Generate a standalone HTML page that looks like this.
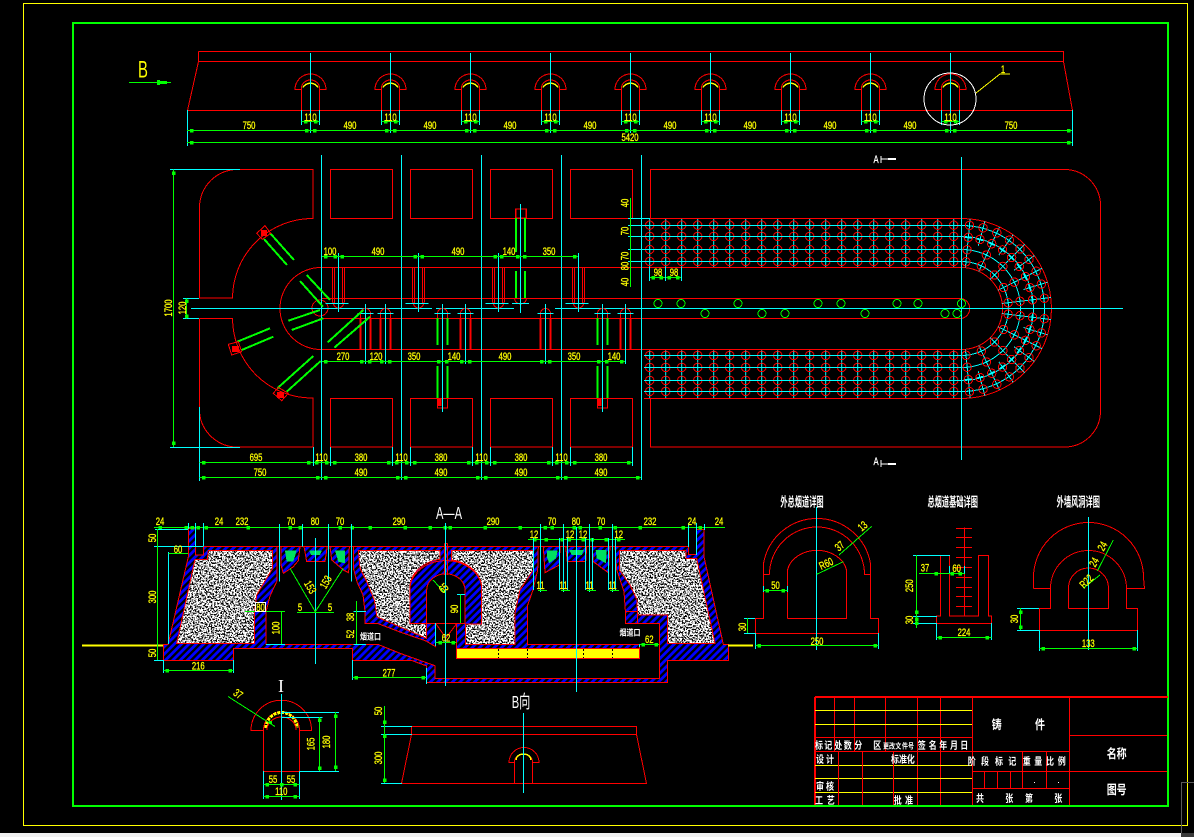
<!DOCTYPE html>
<html><head><meta charset="utf-8"><title>CAD</title>
<style>
html,body{margin:0;padding:0;background:#000;width:1194px;height:837px;overflow:hidden}
svg{display:block;position:absolute;left:0;top:0}
.d{font:11px "Liberation Sans",sans-serif;fill:#ff0;stroke:#ff0;stroke-width:.3;text-anchor:middle;transform-box:fill-box;transform-origin:center;transform:scaleX(.7)}
.w{font:8px "Noto Sans CJK SC","Liberation Sans",sans-serif;font-weight:700;fill:#fff;text-anchor:middle;transform-box:fill-box;transform-origin:center;transform:scaleY(1.25)}
.n{font-size:6px}
.t{font:8.5px "Noto Sans CJK SC","Liberation Sans",sans-serif;font-weight:700;fill:#fff;text-anchor:middle;transform-box:fill-box;transform-origin:center;transform:scale(.85,1.55)}
.dm{marker-mid:url(#s)}
.big{font:24px "Liberation Sans",sans-serif;text-anchor:middle;transform-box:fill-box;transform-origin:center;transform:scaleX(.62)}
</style></head><body>
<svg width="1194" height="837" viewBox="0 0 1194 837" xmlns="http://www.w3.org/2000/svg" shape-rendering="crispEdges" fill="none">
<defs>
<marker id="s" viewBox="0 0 3 3" refX="1.5" refY="1.5" markerWidth="3.5" markerHeight="3.5" markerUnits="userSpaceOnUse" orient="0"><rect width="3" height="3" fill="#0f0"/></marker>
<pattern id="h" patternUnits="userSpaceOnUse" width="5.2" height="5.2" patternTransform="rotate(45)"><rect width="5.2" height="5.2" fill="#000"/><rect width="3" height="5.2" fill="#00f"/></pattern>
<filter id="nz" x="0" y="0" width="1" height="1" color-interpolation-filters="sRGB"><feTurbulence type="fractalNoise" baseFrequency="0.62" numOctaves="2" seed="7"/><feColorMatrix values="0 0 0 0 1 0 0 0 0 1 0 0 0 0 1 16 0 0 0 -7"/><feComposite in2="SourceAlpha" operator="in"/></filter>
<g id="ar">
<path stroke="#f00" d="M-9 89.5H-15.5A15.5 15.5 0 0 1 15.5 89.5H9M-9 110V88A9 8 0 0 1 9 88V110"/>
<path stroke="#ff0" stroke-width="1.5" d="M-7.5 87.5A8 6.5 0 0 1 7.5 87.5"/>
<path stroke="#0ff" d="M0 53V133M-9 110V125M9 110V125"/>
<path stroke="#0f0" class="dm" d="M-9 121.5H-5H5H9"/>
</g>
<pattern id="g1" patternUnits="userSpaceOnUse" x="641.7" y="218" width="16" height="50"><path stroke="#0ff" d="M8 1V49"/><g stroke="#f00"><circle cx="8" cy="7.2" r="4.2"/><circle cx="8" cy="18.4" r="4.2"/><circle cx="8" cy="31.5" r="4.2"/><circle cx="8" cy="43.4" r="4.2"/></g></pattern>
<pattern id="g2" patternUnits="userSpaceOnUse" x="641.7" y="349" width="16" height="50"><path stroke="#0ff" d="M8 1V49"/><g stroke="#f00"><circle cx="8" cy="6.4" r="4.2"/><circle cx="8" cy="18.4" r="4.2"/><circle cx="8" cy="31.4" r="4.2"/><circle cx="8" cy="42.4" r="4.2"/></g></pattern>
<g id="ra"><path stroke="#0ff" d="M65 0H90M71 -4V4M83 -4V4"/><circle cx="71.5" r="4.2" stroke="#f00"/><circle cx="83.5" r="4.2" stroke="#f00"/></g>
<g id="rb"><path stroke="#0ff" d="M41 0H65M47 -4V4M59 -4V4"/><circle cx="47" r="4.2" stroke="#f00"/><circle cx="59" r="4.2" stroke="#f00"/></g>
<g id="q">
<use href="#ra" transform="rotate(-7)"/><use href="#ra" transform="rotate(-17)"/><use href="#ra" transform="rotate(-26.5)"/><use href="#ra" transform="rotate(-36)"/><use href="#ra" transform="rotate(-45.5)"/><use href="#ra" transform="rotate(-55)"/><use href="#ra" transform="rotate(-65)"/><use href="#ra" transform="rotate(-75)"/><use href="#ra" transform="rotate(-84.5)"/>
<use href="#rb" transform="rotate(-7)"/><use href="#rb" transform="rotate(-26.5)"/><use href="#rb" transform="rotate(-45.5)"/><use href="#rb" transform="rotate(-65)"/><use href="#rb" transform="rotate(-84.5)"/>
</g>
<g id="up"><path stroke="#f00" d="M-6 267.5V300M-4 267.5V303M4 267.5V303M6 267.5V300M-6 300A6 8 0 0 0 6 300"/><path stroke="#0ff" d="M-13 303.5H10M0 253V312"/></g>
<g id="lo"><path stroke="#f00" d="M-5 318V313.5A5 5 0 0 1 5 313.5V318"/><path stroke="#f00" stroke-width="2" d="M-5 318V349M5 318V349"/><path stroke="#0ff" d="M-8 313.5H8M0 304V364"/></g>
<g id="lg"><path stroke="#f00" d="M-5 318V313.5A5 5 0 0 1 5 313.5V318M-5 398V408H5V398"/><rect x="-5" y="399" width="4" height="7" fill="#f00"/><path stroke="#0f0" stroke-width="2" d="M-5 318V345M5 318V345M-5 366V398M5 366V398"/><path stroke="#0ff" d="M-8 313.5H8M0 304V412"/></g>
<g id="sp">
<path d="M208.3 550.7H272.7V568.3L256.7 595L254.3 613.3V643.3H176.7L195 559.3H207.3Z"/>
<path d="M358.3 550.7H440V559.3A36 29 0 0 0 410 587V623.3H426.5V638.5L377 617L374.3 600L366.7 581.7L360 568.3Z"/>
<path d="M451.7 550.7H533.3V570L520 590L515 613.3V644.3H465.7V624H481.7V586.7A36 29 0 0 0 451.7 560Z"/>
<path d="M619.3 550.7H686V558.5H696.7L715 643.3H667.7V615H637.5L637 600L630 585L619.3 570Z"/>
</g>
</defs>
<rect width="1194" height="837" fill="#000"/>
<rect x="23.5" y="3.5" width="1164" height="822" stroke="#ff0"/>
<rect x="73" y="23" width="1095" height="783" stroke="#0f0" stroke-width="2"/>

<!-- Top elevation -->
<path stroke="#f00" d="M198.5 51.5V61.5H1063.5V51.5H198.5M198.5 61.5L187.5 110.5H1072.5L1063.5 61.5"/>
<use href="#ar" x="310.5"/><use href="#ar" x="390.5"/><use href="#ar" x="470.5"/><use href="#ar" x="550.5"/><use href="#ar" x="630.5"/><use href="#ar" x="710.5"/><use href="#ar" x="790.5"/><use href="#ar" x="870.5"/><use href="#ar" x="950.5"/>
<path stroke="#0ff" d="M187.5 110V146M1072.5 110V146"/>
<path stroke="#0f0" class="dm" d="M187 130.5H191.5H306.5H314.5H386.5H394.5H466.5H474.5H546.5H554.5H626.5H634.5H706.5H714.5H786.5H794.5H866.5H874.5H946.5H954.5H1068.5H1072"/>
<path stroke="#0f0" class="dm" d="M187 142.5H191.5H1068.5H1072"/>
<circle cx="950" cy="99" r="26" stroke="#fff"/>
<path stroke="#ff0" d="M976 93L1000 74H1010"/>
<text class="d" x="1003" y="73">1</text>
<path stroke="#0f0" d="M129 82.5H171"/><path fill="#0f0" d="M157 80H160V81H167V84H160V85H157Z"/>
<text class="big" x="143" y="77.5" fill="#ff0">B</text>
<text class="d" x="249" y="129">750</text><text class="d" x="350" y="129">490</text><text class="d" x="430" y="129">490</text><text class="d" x="510" y="129">490</text><text class="d" x="590" y="129">490</text><text class="d" x="670" y="129">490</text><text class="d" x="750" y="129">490</text><text class="d" x="830" y="129">490</text><text class="d" x="910" y="129">490</text><text class="d" x="1011" y="129">750</text>
<text class="d" x="310.5" y="121">110</text><text class="d" x="390.5" y="121">110</text><text class="d" x="470.5" y="121">110</text><text class="d" x="550.5" y="121">110</text><text class="d" x="630.5" y="121">110</text><text class="d" x="710.5" y="121">110</text><text class="d" x="790.5" y="121">110</text><text class="d" x="870.5" y="121">110</text><text class="d" x="950.5" y="121">110</text>
<text class="d" x="630" y="141">5420</text>

<!-- Plan left outline -->
<path stroke="#f00" d="M239 169.5H313V218.5A80 80 0 0 0 232.5 298H199.5V207A38 38 0 0 1 239 169.5"/>
<path stroke="#f00" d="M199.5 318.5H232.5A80 80 0 0 0 313 398V447H239A38 38 0 0 1 199.5 412V318.5"/>
<path stroke="#f00" d="M330.5 169.5H392.5V218.5H330.5ZM410.5 169.5H472.5V218.5H410.5ZM490.5 169.5H552.5V218.5H490.5ZM570.5 169.5H632.5V218.5H570.5ZM330.5 398.5H392.5V447H330.5ZM410.5 398.5H472.5V447H410.5ZM490.5 398.5H552.5V447H490.5ZM570.5 398.5H632.5V447H570.5Z"/>
<path stroke="#f00" d="M650.5 218.5V169.5H1065A36 36 0 0 1 1100.5 205V411A36 36 0 0 1 1065 447H650.5V398.5"/>
<path stroke="#f00" d="M321 267.5A40.5 40.5 0 0 0 321 349.5M321 267.5H961.5M321 298.5H961.5A10.2 10.2 0 0 1 961.5 318.5H321M321 349.5H961.5M644 218.5H961.5A89.8 89.8 0 0 1 961.5 398.5H644M961.5 267.5A41 41 0 0 1 961.5 349.5"/>
<circle cx="320" cy="308" r="8" stroke="#f00"/>

<rect x="641.7" y="218.5" width="320" height="49" fill="url(#g1)"/>
<rect x="641.7" y="349.5" width="320" height="49" fill="url(#g2)"/>
<path stroke="#0ff" d="M628 225.5H961.5M628 236.5H961.5M628 249.5H961.5M628 261.5H961.5M644 355.5H961.5M644 367.5H961.5M644 380.5H961.5M644 391.5H961.5M628 218.5H650"/>
<path stroke="#0ff" d="M961.5 225.5A83 83 0 0 1 961.5 391.5M961.5 236.5A71.5 71.5 0 0 1 961.5 380.5M961.5 249.5A59 59 0 0 1 961.5 367.5M961.5 261.5A47 47 0 0 1 961.5 355.5"/>
<g transform="translate(961.5 308.5)"><use href="#q"/><use href="#q" transform="scale(1 -1)"/></g>

<!-- cyan centre lines -->
<path stroke="#0ff" d="M321.5 155V480M401.5 155V480M481.5 155V480M561.5 155V480M641.5 155V480M961.5 157V460"/>
<path stroke="#0ff" d="M191 308.5H432M436 308.5H514M555 308.5H1123"/>
<path stroke="#0ff" d="M183 298.5H199M183 318.5H199M170 169.5H240M170 447.5H240M199.5 407V481"/>
<path stroke="#0f0" class="dm" d="M186.5 298.5V301V316V318.5"/>
<path stroke="#0f0" class="dm" d="M173.5 169.5V173V443V447"/>

<!-- burners -->
<use href="#up" x="338.5"/><use href="#up" x="418.5"/><use href="#up" x="498.5"/><use href="#up" x="578.5"/>
<path stroke="#f00" d="M515.5 218.5V209H526.5V218.5M514.5 298A6 6 0 0 0 526.5 298"/>
<rect x="516" y="209" width="10" height="9" stroke="#f00"/>
<path stroke="#0f0" stroke-width="2" d="M516 218V252M525 218V252M516 271V298M525 271V298"/>
<path stroke="#0ff" d="M520.5 204V313M512 303.5H529"/>
<use href="#lo" x="365.5" /><use href="#lo" x="385.5"/><use href="#lg" x="442.5"/><use href="#lo" x="465.5"/><use href="#lo" x="545.5"/><use href="#lg" x="602.5"/><use href="#lo" x="625.5"/>
<g stroke="#0f0" stroke-width="2">
<path d="M270 233L294 260M264 239L287 265M306.7 275L330 300M300 281L323 306.7M288.3 320.7L320 310M291.7 330L323.3 318.3M237.3 341.7L270 328.3M241.7 350L273.3 336.7M277.3 388.3L313.3 356M286.7 391.7L320.7 361M327.7 342.3L363.3 310M334.3 347.7L370 316.7"/>
</g>
<g stroke="#f00"><path d="M256.7 233.3L265 225.7L270.7 233.3L262.3 239.3Z"/><path d="M228.3 344.3L238.3 341.7L241.7 351.7L231.7 355Z"/><path d="M273.3 393.3L278.3 387.3L288.3 393.3L281.7 400.7Z"/></g>
<g fill="#f00"><rect x="261" y="230" width="6" height="6"/><rect x="232" y="346" width="7" height="6"/><rect x="277" y="392" width="7" height="6"/></g>
<g stroke="#0f0"><circle cx="658" cy="303.5" r="4"/><circle cx="681" cy="303.5" r="4"/><circle cx="738" cy="303.5" r="4"/><circle cx="818" cy="303.5" r="4"/><circle cx="841" cy="303.5" r="4"/><circle cx="897" cy="303.5" r="4"/><circle cx="918" cy="303.5" r="4"/><circle cx="961.5" cy="303.5" r="4"/><circle cx="705" cy="313.5" r="4"/><circle cx="762" cy="313.5" r="4"/><circle cx="785" cy="313.5" r="4"/><circle cx="865" cy="313.5" r="4"/><circle cx="945" cy="313.5" r="4"/><circle cx="957" cy="313.5" r="4"/></g>

<!-- plan dims -->
<path stroke="#0f0" class="dm" d="M322 256.5H325.5H335H342H415H422H495H501.5H517.5H524.5H574.5H578"/>
<path stroke="#0f0" class="dm" d="M322 361.5H325.5H361.5H369.5H381.5H389.5H438.5H446.5H461.5H469.5H541.5H549.5H598.5H606.5H621.5H625"/>
<path stroke="#0f0" class="dm" d="M199.5 462.5H203.5H308.5H316.5H326.5H334.5H388.5H396.5H406.5H414.5H468.5H476.5H486.5H494.5H548.5H556.5H566.5H574.5H628.5H632.5"/>
<path stroke="#0f0" class="dm" d="M199.5 477.5H203.5H317.5H325.5H397.5H405.5H477.5H485.5H557.5H565.5H637.5H641"/>
<path stroke="#0ff" d="M313.5 447V466M330.5 447V466M392.5 447V466M410.5 447V466M472.5 447V466M490.5 447V466M552.5 447V466M570.5 447V466M632.5 447V466"/>
<path stroke="#0f0" d="M630.5 198V287"/>
<path stroke="#0f0" class="dm" d="M649.5 277.5H653H661H669H677.5H681.5"/>
<path stroke="#0ff" d="M649.5 267V281M665.5 267V281M681.5 267V281"/>
<text class="d" x="330" y="255">100</text><text class="d" x="378" y="255">490</text><text class="d" x="458" y="255">490</text><text class="d" x="509" y="255">140</text><text class="d" x="549" y="255">350</text>
<text class="d" x="343" y="360">270</text><text class="d" x="376" y="360">120</text><text class="d" x="414" y="360">350</text><text class="d" x="454" y="360">140</text><text class="d" x="505" y="360">490</text><text class="d" x="574" y="360">350</text><text class="d" x="614" y="360">140</text>
<text class="d" x="256" y="461">695</text><text class="d" x="321.5" y="461">110</text><text class="d" x="361" y="461">380</text><text class="d" x="401.5" y="461">110</text><text class="d" x="441" y="461">380</text><text class="d" x="481.5" y="461">110</text><text class="d" x="521" y="461">380</text><text class="d" x="561.5" y="461">110</text><text class="d" x="601" y="461">380</text>
<text class="d" x="260" y="476">750</text><text class="d" x="361" y="476">490</text><text class="d" x="441" y="476">490</text><text class="d" x="521" y="476">490</text><text class="d" x="601" y="476">490</text>
<text class="d" x="658" y="276">98</text><text class="d" x="674" y="276">98</text>
<g transform="rotate(-90 172 308)"><text class="d" x="172" y="308">1700</text></g>
<g transform="rotate(-90 186 308)"><text class="d" x="186" y="308">120</text></g>
<g transform="rotate(-90 628.5 203)"><text class="d" x="628.5" y="203">40</text></g>
<g transform="rotate(-90 628.5 231)"><text class="d" x="628.5" y="231">70</text></g>
<g transform="rotate(-90 628.5 256)"><text class="d" x="628.5" y="256">70</text></g>
<g transform="rotate(-90 628.5 266)"><text class="d" x="628.5" y="266">80</text></g>
<g transform="rotate(-90 628.5 282)"><text class="d" x="628.5" y="282">40</text></g>

<!-- A / cut marks -->
<path stroke="#fff" d="M881 159H888M881 464H888M881 156V163M881 460V467"/>
<path fill="#fff" d="M888 158H896V160H888ZM888 463H896V465H888Z"/>
<text class="d" x="876" y="163" style="fill:#fff;stroke:#fff">A</text><text class="d" x="876" y="465" style="fill:#fff;stroke:#fff">A</text>

<!-- Section A-A -->
<path fill="url(#h)" stroke="#f00" d="M163.5 644.5H168L188.5 556V528.5H195.7V555H203.7V546.5H688.3V554.7H696.3V529.3H704V556.7L723.3 644.3H728.5V660.5H667.5V682.5H426.7V666L411.7 660.5H352.7V648.5H233.5V660.5H163.5Z"/>
<path fill="#000" stroke="#f00" d="M277 546.5V581L270 596L266 611.7V644.5H378.3L400 653.3L435 665.7V678.5H659.5V623.7H625.7V615.7L624 591.7L616.7 570L615 546.5H538.3L537.7 570L533 590L527.7 605V644.5H639.3V658.5H456.7V623.5H435.7V646.7L426 641L400 632L377.7 623.5H365V611.7L363 595L357 582L353.3 568V546.5Z"/>
<path fill="#000" stroke="#f00" d="M426.7 623.5V590A19 16 0 0 1 465 590V623.5Z"/>
<use href="#sp" fill="#000"/><use href="#sp" fill="#fff" filter="url(#nz)"/><use href="#sp" stroke="#f00"/>
<path stroke="#f00" d="M410 623.5V587A36 29 0 0 1 481.7 587V623.5M444.3 543.3V575M447.3 543.3V575M444.3 543.3H447.3M435.7 623.5L446 638L456.7 623.5M353 644.5H378.3"/>
<path stroke="#f00" d="M625.7 611.7H637.5V623.5"/>
<g fill="url(#h)" stroke="#f00">
<path d="M281 546.7H300L298.3 560.7L293 567L283.3 573.3L281 565Z"/>
<path d="M304 546.7H327.3L325 561.7H306.7Z"/>
<path d="M330 546.7H349.3L348.7 572.7L343.3 570L331.7 560Z"/>
<path d="M543.3 546.7H560L559.3 565L545 572.7Z"/>
<path d="M565.7 546.7H586.7L585.7 561.7H567.3Z"/>
<path d="M592.3 546.7H610L608.3 572.7L593.3 561.7Z"/>
</g>
<g fill="#00e060">
<path d="M285 550.7H296.7L293.3 561.7H286.7Z"/>
<path d="M309.3 550.7H321.7L320 555H311Z"/>
<path d="M335 550.7H345V563.3L338.3 561.7Z"/>
<path d="M546.7 550.7H557.7L556 558.3L549.3 563.3L547.3 558.3Z"/>
<path d="M569.3 550H584L581.7 555H571.7Z"/>
<path d="M595.7 550H606.7L606 563.3L596.7 558.3Z"/>
</g>
<rect x="456.5" y="648.5" width="183" height="10" fill="#ff0" stroke="#f00"/>
<path stroke="#000" stroke-dasharray="2 2" d="M498.5 649V658M527.5 649V658M583.5 649V658M612.5 649V658"/>
<path stroke="#ff0" stroke-width="2" d="M82 645.5H163M728 645.5H753"/>

<path stroke="#0f0" class="dm" d="M154 527.5H160H186H192H198H206H248H290H300H340H352H370H405H430H445H450H485H520H545H552H574H580H600H615H640H683H700H725"/>
<path stroke="#0f0" class="dm" d="M528 539.5H534.5H546H562H569H583H592H606H618.5H625"/>
<g stroke="#0ff">
<path d="M155 529.5H188M154 546.5H203.7M154 660.5H163.5M168.5 552V644M195.7 523V546M203.7 523V546M188.5 523V529"/>
<path d="M279.5 524V581.7M302.5 524V546.7M328.5 524V581.7M351.5 524V581.7M315.5 538V664M445.5 523V686M576.5 527V692"/>
<path d="M540.5 524V592M563.5 524V592M589.5 524V592M612.5 524V592M559.5 538V590M567.5 538V590M585.5 538V590M592.5 538V590M608.5 538V590M615.5 538V590M533.5 538V590"/>
<path d="M688.5 523V547M696.5 523V555M704.5 524V530"/>
<path d="M266 611.5H285M266 644.5H285M353.3 611.5H366M353.3 644.5H366M163.5 660V673M233.5 660V673M352.7 660V680M426.7 668V684M457 594.5H465M435.5 623V646M639.5 644V647"/>
</g>
<path stroke="#0f0" d="M157.5 529V660M168.5 553.5H188M245 611.5H285M281.5 612V644M356.5 601V644M460.5 594.5V623"/>
<path stroke="#0f0" class="dm" d="M163.5 670.5H167H230H233.5"/>
<path stroke="#0f0" class="dm" d="M352.7 677.5H356H423H426.7"/>
<path stroke="#0f0" class="dm" d="M435.7 642.5H440H453H456.7"/>
<path stroke="#0f0" class="dm" d="M639.7 644.5H643H656H659"/>
<path stroke="#0f0" d="M290 568.3L315.3 611.7L343.3 568.3M297 612.5H334M433 580L445 593M538 590.5H547M561 590.5H570M587 590.5H596M610 590.5H619"/>
<rect x="255.5" y="602.5" width="10" height="9" fill="#000" stroke="#fff"/>
<text class="d" x="260.5" y="611">80</text>
<text class="d" x="160" y="525">24</text><text class="d" x="219" y="525">24</text><text class="d" x="242" y="525">232</text><text class="d" x="291" y="525">70</text><text class="d" x="315" y="525">80</text><text class="d" x="340" y="525">70</text><text class="d" x="399" y="525">290</text><text class="d" x="493" y="525">290</text><text class="d" x="552" y="525">70</text><text class="d" x="576" y="525">80</text><text class="d" x="601" y="525">70</text><text class="d" x="650" y="525">232</text><text class="d" x="692" y="525">24</text><text class="d" x="719" y="525">24</text>
<text class="d" x="534" y="538">12</text><text class="d" x="570" y="538">12</text><text class="d" x="583" y="538">12</text><text class="d" x="618.7" y="538">12</text>
<text class="d" x="540.5" y="589">11</text><text class="d" x="563.5" y="589">11</text><text class="d" x="589.5" y="589">11</text><text class="d" x="612.5" y="589">11</text>
<text class="d" x="178" y="553">60</text><text class="d" x="198.3" y="669.5">216</text><text class="d" x="389" y="676.5">277</text><text class="d" x="446" y="641.5">62</text><text class="d" x="649.3" y="643">62</text>
<text class="d" x="300" y="611">5</text><text class="d" x="330" y="611">5</text>
<g transform="rotate(60 307 589)"><text class="d" x="307" y="589">153</text></g>
<g transform="rotate(-60 329 584)"><text class="d" x="329" y="584">153</text></g>
<g transform="rotate(-40 446 591)"><text class="d" x="446" y="591">65</text></g>
<g transform="rotate(-90 156 538)"><text class="d" x="156" y="538">50</text></g>
<g transform="rotate(-90 156 597)"><text class="d" x="156" y="597">300</text></g>
<g transform="rotate(-90 156 653)"><text class="d" x="156" y="653">50</text></g>
<g transform="rotate(-90 279.5 628)"><text class="d" x="279.5" y="628">100</text></g>
<g transform="rotate(-90 354 617)"><text class="d" x="354" y="617">38</text></g>
<g transform="rotate(-90 354 634)"><text class="d" x="354" y="634">52</text></g>
<g transform="rotate(-90 458 609)"><text class="d" x="458" y="609">90</text></g>
<text class="w" x="370.5" y="639" style="font-size:7px">烟道口</text>
<text class="w" x="630" y="635" style="font-size:7px">烟道口</text>
<text class="big" x="449" y="519" fill="#fff" style="font-size:18px">A—A</text>

<!-- Detail I -->
<text x="281" y="692" fill="#fff" text-anchor="middle" style="font:18px 'Liberation Serif',serif">I</text>
<path stroke="#f00" d="M263.5 730.5H251A30 30 0 0 1 311.5 730.5H299.5M263.5 730V771.5H299.5V730M263.5 730A18 18 0 0 1 299.5 730"/>
<path stroke="#ff0" stroke-width="3" stroke-dasharray="3 1" d="M266 728A15.5 15.5 0 0 1 297 728"/>
<path stroke="#f00" d="M267 730A14.5 13 0 0 1 296 730"/>
<path stroke="#0ff" d="M281.5 694V800M281 712.5H339M281 717.5H322.7M299 771.5H339M263.5 771V799M299.5 771V799"/>
<path stroke="#0f0" class="dm" d="M335.5 712V716H335.5V767V771"/>
<path stroke="#0f0" class="dm" d="M319.5 717V720V768V771"/>
<path stroke="#0f0" class="dm" d="M263.5 784.5H267H281.5H295H299.5"/>
<path stroke="#0f0" class="dm" d="M263.5 796.5H267H295H299.5"/>
<path stroke="#0f0" d="M228 696.5L275 726.5"/>
<rect x="269" y="721" width="3" height="3" fill="#0f0"/>
<text class="d" x="273" y="783">55</text><text class="d" x="291" y="783">55</text><text class="d" x="281.3" y="795">110</text>
<g transform="rotate(35 236 697)"><text class="d" x="236" y="697">37</text></g>
<g transform="rotate(-90 330 742)"><text class="d" x="330" y="742">180</text></g>
<g transform="rotate(-90 314.7 744)"><text class="d" x="314.7" y="744">165</text></g>

<!-- B direction -->
<text class="big" x="521" y="708" fill="#fff" style="font-size:18px;font-family:'Liberation Sans','Noto Sans CJK SC',sans-serif">B向</text>
<path stroke="#f00" d="M411.5 726.5H636.5V734.5H411.5ZM411.5 734.5L401.5 783.5H646.5L636.5 734.5"/>
<path stroke="#f00" d="M514.5 762.5H509A15 15 0 0 1 539 762.5H532.5M514.5 783V762A9 8 0 0 1 532.5 762V783"/>
<path stroke="#ff0" stroke-width="1.5" d="M516 760A7.5 6 0 0 1 531 760"/>
<path stroke="#0ff" d="M523.5 713V793M381 726.5H412M381 734.5H412M381 783.5H402"/>
<path stroke="#0f0" class="dm" d="M384.5 706V722V736V780V783"/>
<g transform="rotate(-90 382 711)"><text class="d" x="382" y="711">50</text></g>
<g transform="rotate(-90 382 758)"><text class="d" x="382" y="758">300</text></g>

<!-- Right detail 1 -->
<text class="t" x="802" y="505">外总烟道详图</text>
<text class="t" x="952.7" y="505">总烟道基础详图</text>
<text class="t" x="1078.3" y="505">外墙风洞详图</text>
<path stroke="#f00" d="M763.5 563.5A54.3 54.3 0 0 1 870.5 563.5V618.5H878.5V633.5H755.5V618.5H763.5V563.5M755.5 633.5H878.5M769.5 574.5H763.5M769.5 574.5A47.5 47.5 0 0 1 864.5 574.5H870.5M787.5 618.5V570A30 24 0 0 1 846.5 570V618.5H787.5M763.5 618.5H755.5"/>
<path stroke="#0ff" d="M816.5 507V650M744 618.5H755M744 633.5H755M755.5 633V649M878.5 633V649M763.5 586V592M787.5 586V592"/>
<path stroke="#0f0" class="dm" d="M763.5 590.5H767H783H787.5"/>
<path stroke="#0f0" d="M747.5 618V633"/>
<path stroke="#0f0" class="dm" d="M755.5 645.5H759H875H878.5"/>
<path stroke="#0f0" d="M816.7 574.3L843.3 561.7M839 555L871.7 526.3"/>
<text class="d" x="775.5" y="589">50</text><text class="d" x="817" y="645">250</text>
<g transform="rotate(-90 746 627)"><text class="d" x="746" y="627">30</text></g>
<g transform="rotate(-25 827.7 567)"><text class="d" x="827.7" y="567">R60</text></g>
<g transform="rotate(-40 842 549)"><text class="d" x="842" y="549">37</text></g>
<g transform="rotate(-40 865 529)"><text class="d" x="865" y="529">13</text></g>

<!-- Right detail 2 -->
<path stroke="#f00" d="M936.5 623.5V616H940.5V555.5H949.5V616H978.5V555.5H988.5V616H991.5V623.5ZM964.5 527.5V616M956 528.5H972M956 537.5H972M956 547.5H972M956 557.5H972M956 567.5H972M956 577.5H972M956 587.5H972M956 596.5H972M956 606.5H972"/>
<path stroke="#0ff" d="M913 555.5H950M913 616.5H937M913 623.5H937M936.5 623V640M991.5 623V640M964.5 566V574M949.5 566V574"/>
<path stroke="#0f0" class="dm" d="M916.5 555V612V619V623V628"/>
<path stroke="#0f0" class="dm" d="M919 573.5H936H952H960H964.5"/>
<path stroke="#0f0" class="dm" d="M936.5 637.5H940H987H991.5"/>
<text class="d" x="925" y="571.5">37</text><text class="d" x="956.7" y="572">60</text><text class="d" x="964" y="636">224</text>
<g transform="rotate(-90 913 585.7)"><text class="d" x="913" y="585.7">250</text></g>
<g transform="rotate(-90 913 620)"><text class="d" x="913" y="620">30</text></g>

<!-- Right detail 3 -->
<path stroke="#f00" d="M1033.5 588.5V577.5A55 55 0 0 1 1143.5 577.5L1144.5 588.5H1126.5V608.5H1137.5V630.5H1039.5V608.5H1050.5V588.5H1033.5M1050.5 588.5A38 38 0 0 1 1126.5 588.5M1068.5 608.5V588A20 20 0 0 1 1108.5 588V608.5H1068.5"/>
<path stroke="#0ff" d="M1088.5 517V650M1017 608.5H1039M1017 630.5H1039M1039.5 630V651M1137.5 630V651"/>
<path stroke="#0f0" class="dm" d="M1020.5 608V612V627V630"/>
<path stroke="#0f0" class="dm" d="M1039.5 648.5H1043H1134H1137.5"/>
<path stroke="#0f0" d="M1113.3 540L1097.3 571M1083.3 588.3L1100 575"/>
<text class="d" x="1088.3" y="647">133</text>
<g transform="rotate(-90 1018 619)"><text class="d" x="1018" y="619">30</text></g>
<g transform="rotate(-60 1105.7 548)"><text class="d" x="1105.7" y="548">24</text></g>
<g transform="rotate(-60 1097.3 564)"><text class="d" x="1097.3" y="564">24</text></g>
<g transform="rotate(-45 1089 584)"><text class="d" x="1089" y="584">R22</text></g>

<!-- Title block -->
<path stroke="#f00" stroke-width="2" d="M815 697H1168M815 697V805"/>
<path stroke="#f00" d="M834.5 697V751M854.5 697V751M885.5 697V751M917.5 697V805M940.5 697V805M972.5 697V805M815 737.5H972M815 751.5H1069"/>
<path stroke="#ff0" d="M815 710.5H972M815 724.5H972M815 765.5H972M815 778.5H972M815 792.5H972"/>
<path stroke="#f00" d="M838.5 751V805M862.5 751V805M893.5 751V805M1069.5 697V805M1069 735.5H1167M972 771.5H1167M1022.5 751V788M1046.5 751V788M972 788.5H1069M984.5 771V788M997.5 771V788M1010.5 771V788"/>
<text class="w" x="996.7" y="728" style="font-size:10px">铸</text><text class="w" x="1040" y="728" style="font-size:10px">件</text>
<text class="w" x="819" y="748">标</text><text class="w" x="828.3" y="748">记</text><text class="w" x="838.3" y="748">处</text><text class="w" x="847.7" y="748">数</text><text class="w" x="858.3" y="748">分</text><text class="w" x="877.3" y="748">区</text><text class="w n" x="886" y="748">更</text><text class="w n" x="892" y="748">改</text><text class="w n" x="898.3" y="748">文</text><text class="w n" x="905" y="748">件</text><text class="w n" x="911" y="748">号</text><text class="w" x="921.7" y="748">签</text><text class="w" x="932.7" y="748">名</text><text class="w" x="943.3" y="748">年</text><text class="w" x="954" y="748">月</text><text class="w" x="964.3" y="748">日</text>
<text class="w" x="820" y="762">设</text><text class="w" x="830" y="762">计</text><text class="w" x="895" y="762">标</text><text class="w" x="903" y="762">准</text><text class="w" x="910.7" y="762">化</text>
<text class="w" x="971.7" y="764">阶</text><text class="w" x="985" y="764">段</text><text class="w" x="999" y="764">标</text><text class="w" x="1012.3" y="764">记</text><text class="w" x="1026.7" y="764">重</text><text class="w" x="1038.3" y="764">量</text><text class="w" x="1050" y="764">比</text><text class="w" x="1061.7" y="764">例</text>
<text class="w" x="820" y="789">审</text><text class="w" x="830" y="789">核</text>
<text class="w" x="819" y="803">工</text><text class="w" x="830.7" y="803">艺</text><text class="w" x="897.7" y="803">批</text><text class="w" x="909" y="803">准</text>
<text class="w" x="980" y="801">共</text><text class="w" x="1009.3" y="801">张</text><text class="w" x="1029" y="801">第</text><text class="w" x="1058.3" y="801">张</text>
<text class="w" x="1116.7" y="757" style="font-size:10px">名称</text><text class="w" x="1116.7" y="793" style="font-size:10px">图号</text>
<rect x="1034" y="782" width="1" height="1" fill="#fff"/><rect x="1058" y="782" width="1" height="1" fill="#fff"/>

<!-- window chrome -->
<rect x="0" y="833" width="1194" height="4" fill="#f0f0f0"/>
<rect x="1181" y="833" width="13" height="4" fill="#3a3a3a"/>
<path stroke="#5a5a5a" d="M1194 782.5H1181.5V833"/>
</svg>
</body></html>
